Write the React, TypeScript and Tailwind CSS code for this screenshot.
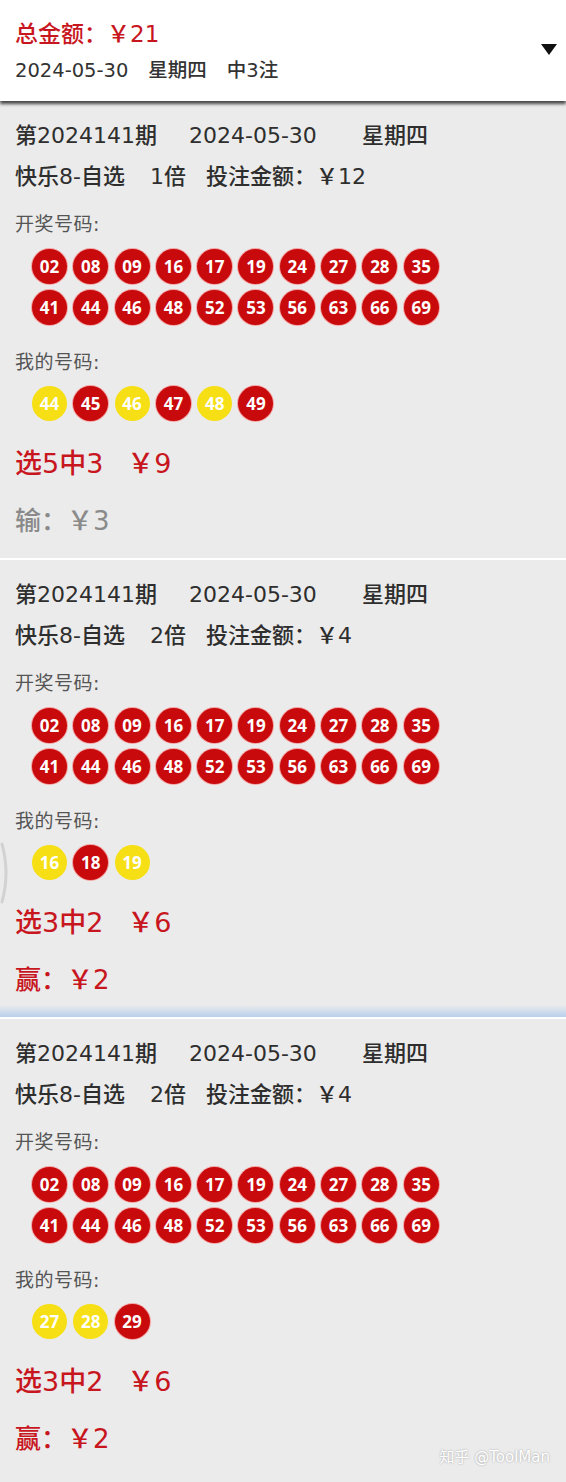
import React from "react";

type Ticket = {
  times: string;
  amount: string;
  mine: { n: string; hit: boolean }[];
  pick: string;
  prize: string;
  result: string;
  win: boolean;
  glow?: boolean;
};

const drawn = [
  ["02", "08", "09", "16", "17", "19", "24", "27", "28", "35"],
  ["41", "44", "46", "48", "52", "53", "56", "63", "66", "69"],
];

const tickets: Ticket[] = [
  {
    times: "1倍",
    amount: "￥12",
    mine: [
      { n: "44", hit: true },
      { n: "45", hit: false },
      { n: "46", hit: true },
      { n: "47", hit: false },
      { n: "48", hit: true },
      { n: "49", hit: false },
    ],
    pick: "选5中3",
    prize: "￥9",
    result: "输：￥3",
    win: false,
  },
  {
    times: "2倍",
    amount: "￥4",
    mine: [
      { n: "16", hit: true },
      { n: "18", hit: false },
      { n: "19", hit: true },
    ],
    pick: "选3中2",
    prize: "￥6",
    result: "赢：￥2",
    win: true,
    glow: true,
  },
  {
    times: "2倍",
    amount: "￥4",
    mine: [
      { n: "27", hit: true },
      { n: "28", hit: true },
      { n: "29", hit: false },
    ],
    pick: "选3中2",
    prize: "￥6",
    result: "赢：￥2",
    win: true,
  },
];

function Ball({ n, yellow }: { n: string; yellow?: boolean }) {
  return (
    <div
      className={`w-[35px] h-[35px] rounded-full flex items-center justify-center text-white font-bold text-[17px] leading-none font-['Noto_Sans',sans-serif] ${
        yellow ? "bg-[#f6df14]" : "bg-[#c80a0c] ring-1 ring-[#f3a3a3]"
      }`}
    >
      {n}
    </div>
  );
}

function Card({ t }: { t: Ticket }) {
  return (
    <div className="relative h-[457px] px-[15px] pt-[14px] bg-[#ebebeb]">
      {/* 期号 / 日期 / 星期 */}
      <div className="flex h-[41px] items-center text-[22px] font-medium text-[#2e2e2e]">
        <span className="w-[174px]">第2024141期</span>
        <span className="w-[173px]">2024-05-30</span>
        <span>星期四</span>
      </div>
      <div className="flex h-[41px] items-center text-[22px] font-medium text-[#2e2e2e]">
        <span>快乐8-自选</span>
        <span className="ml-[25px]">{t.times}</span>
        <span className="ml-[20px]">投注金额：{t.amount}</span>
      </div>

      <div className="mt-[12px] h-[30px] flex items-center text-[19px] tracking-[0.5px] text-[#555]">
        开奖号码:
      </div>
      <div className="mt-[10px] pl-[17px] flex flex-col gap-[6px]">
        {drawn.map((row, i) => (
          <div key={i} className="flex gap-[6.3px]">
            {row.map((n) => (
              <Ball key={n} n={n} />
            ))}
          </div>
        ))}
      </div>

      <div className="mt-[22px] h-[30px] flex items-center text-[19px] tracking-[0.5px] text-[#555]">
        我的号码:
      </div>
      <div className="mt-[9px] pl-[17px] flex gap-[6.3px]">
        {t.mine.map((b) => (
          <Ball key={b.n} n={b.n} yellow={b.hit} />
        ))}
      </div>

      <div className="mt-[25px] h-[36px] flex items-center text-[27px] font-medium text-[#c8161e]">
        <span>{t.pick}</span>
        <span className="ml-[24px]">{t.prize}</span>
      </div>
      <div
        className={`mt-[21px] h-[36px] flex items-center text-[26px] font-medium ${
          t.win ? "text-[#c8161e]" : "text-[#8a8a8a]"
        }`}
      >
        {t.result}
      </div>

      {t.glow && (
        <div className="absolute left-0 right-0 bottom-0 h-[12px] bg-gradient-to-b from-transparent to-[#b9d0ec]" />
      )}
    </div>
  );
}

export default function App() {
  return (
    <div
      className="relative w-[566px] h-[1482px] overflow-hidden bg-[#ebebeb]"
      style={{ fontFamily: '"DejaVu Sans", "Noto Sans CJK SC", sans-serif' }}
    >
      {/* 顶部汇总 */}
      <div className="relative z-10 h-[101px] bg-white pl-[15px] pr-[9px] pt-[4px] flex items-center shadow-[0_3px_3px_rgba(0,0,0,0.7)]">
        <div className="flex-1">
          <div className="h-[36px] flex items-center text-[23px] font-medium text-[#c8161e]">
            总金额：￥21
          </div>
          <div className="h-[36px] flex items-center text-[19.5px] font-medium text-[#333]">
            <span>2024-05-30</span>
            <span className="ml-[20px]">星期四</span>
            <span className="ml-[20px]">中3注</span>
          </div>
        </div>
        <svg width="16" height="11" viewBox="0 0 16 11" className="mb-[6px]">
          <path d="M0 0 L16 0 L8 11 Z" fill="#111" />
        </svg>
      </div>

      <div className="flex flex-col gap-[2px] bg-white">
        {tickets.map((t, i) => (
          <Card key={i} t={t} />
        ))}
      </div>

      {/* 左侧滚动弧 */}
      <svg className="absolute left-0 top-[842px]" width="12" height="62" viewBox="0 0 12 62">
        <path d="M2 2 Q10 31 2 60" stroke="#d2d2d2" strokeWidth="3" fill="none" strokeLinecap="round" />
      </svg>

      {/* 水印 */}
      <div className="absolute right-[16px] bottom-[14px] text-[15px] text-white [text-shadow:0_0_2px_rgba(0,0,0,0.35)]">
        知乎 @ToolMan
      </div>
    </div>
  );
}
